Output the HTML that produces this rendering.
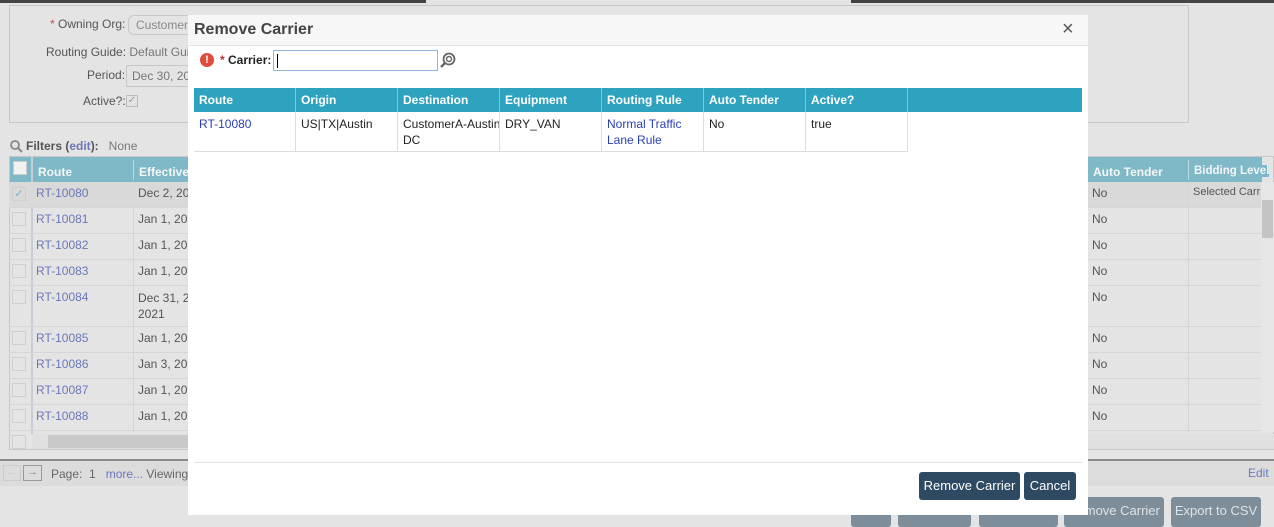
<!DOCTYPE html>
<html><head><meta charset="utf-8"><style>
*{box-sizing:border-box;margin:0;padding:0}
body{width:1274px;height:525px;overflow:hidden;background:#e4e4e4;font-family:"Liberation Sans",sans-serif;font-size:12px;color:#555;position:relative}
.a{position:absolute;white-space:nowrap}
.lnk{color:#6b78b8}
.bh{background:#7fb8c7;color:#f2f6f7;font-weight:bold}
.row{position:absolute;left:9px;width:1253px;border-bottom:1px solid #d6d6d6}
.btn{position:absolute;top:497px;height:30px;background:#7d8d99;color:#dfe3e6;border-radius:3px;font-size:13px;text-align:center;line-height:28px;white-space:nowrap;overflow:hidden}
.m{position:absolute;left:188px;top:15px;width:900px;height:500px;background:#fff}
.th{position:absolute;top:73px;height:24px;background:#2ea3bf;color:#fff;font-weight:bold;line-height:24px;padding-left:5px;border-right:1px solid #7fc6d8}
.td{position:absolute;top:97px;height:40px;padding:4px 5px;color:#222;line-height:16px;border-right:1px solid #ddd;border-bottom:1px solid #ddd;white-space:nowrap;overflow:hidden}
.ck{position:absolute;left:12px;width:14px;height:14px;border:1px solid #cfcfcf}
</style></head><body>
<div class="a" style="left:0;top:0;width:1274px;height:3px;background:#444"></div>
<div class="a" style="left:426px;top:0;width:425px;height:3px;background:#e4e4e4"></div>
<div class="a" style="left:9px;top:5px;width:1180px;height:118px;border:1px solid #c8c8c8"></div>
<div class="a" style="left:50px;top:17px;color:#555"><span style="color:#b55">*</span> Owning Org:</div>
<div class="a" style="left:128px;top:15px;width:70px;height:20px;border:1px solid #c8c8c8;border-radius:6px;padding:2px 7px;color:#888;overflow:hidden">CustomerA</div>
<div class="a" style="left:46px;top:45px">Routing Guide: <span style="color:#777">Default Guide</span></div>
<div class="a" style="left:87px;top:68px">Period:</div>
<div class="a" style="left:126px;top:65px;width:70px;height:22px;border:1px solid #c8c8c8;padding:3px 5px;color:#777;overflow:hidden">Dec 30, 20</div>
<div class="a" style="left:83px;top:94px">Active?:</div>
<div class="a" style="left:126px;top:95px;width:12px;height:12px;border:1px solid #bbb;color:#999;font-size:10px;line-height:10px;text-align:center">✓</div>
<svg class="a" style="left:9px;top:139px" width="14" height="14" viewBox="0 0 14 14"><circle cx="6" cy="6" r="4" fill="none" stroke="#888" stroke-width="1.8"/><path d="M9 9 L13 13" stroke="#888" stroke-width="2"/></svg>
<div class="a" style="left:26px;top:139px;font-weight:bold;color:#555">Filters (<span class="lnk">edit</span>): <span style="font-weight:normal;color:#777">&nbsp; None</span></div>
<div class="a" style="left:9px;top:156px;width:1265px;height:294px;border:1px solid #c8c8c8"></div>
<div class="a bh" style="left:10px;top:157px;width:1252px;height:25px"></div>
<div class="a" style="left:13px;top:161px;width:14px;height:14px;border:1px solid #ccc;background:#f2f2f2"></div>
<div class="a" style="left:31px;top:157px;width:2px;height:277px;background:#c8cdd5"></div>
<div class="a bh" style="left:38px;top:165px">Route</div>
<div class="a bh" style="left:139px;top:165px">Effective</div>
<div class="a" style="left:133px;top:160px;width:1px;height:20px;background:#b9dbe4"></div>
<div class="a bh" style="left:1093px;top:165px">Auto Tender</div>
<div class="a" style="left:1188px;top:160px;width:1px;height:20px;background:#b9dbe4"></div>
<div class="a bh" style="left:1194px;top:165px;font-size:11.5px">Bidding Level</div>
<div class="row" style="top:182px;height:26px;background:#d9d9d9"></div>
<div class="row" style="top:208px;height:26px"></div>
<div class="row" style="top:234px;height:26px"></div>
<div class="row" style="top:260px;height:26px"></div>
<div class="row" style="top:286px;height:41px"></div>
<div class="row" style="top:327px;height:26px"></div>
<div class="row" style="top:353px;height:26px"></div>
<div class="row" style="top:379px;height:26px"></div>
<div class="row" style="top:405px;height:26px"></div>
<div class="a" style="left:133px;top:182px;width:1px;height:250px;background:#d6d6d6"></div>
<div class="a" style="left:1188px;top:182px;width:1px;height:250px;background:#d6d6d6"></div>
<div class="ck" style="top:187px;color:#7ab5cb;font-size:11px;line-height:12px;text-align:center">✓</div>
<div class="ck" style="top:212px"></div>
<div class="ck" style="top:238px"></div>
<div class="ck" style="top:264px"></div>
<div class="ck" style="top:290px"></div>
<div class="ck" style="top:331px"></div>
<div class="ck" style="top:357px"></div>
<div class="ck" style="top:383px"></div>
<div class="ck" style="top:409px"></div>
<div class="ck" style="top:435px"></div>
<div class="a lnk" style="left:36px;top:186px">RT-10080</div>
<div class="a lnk" style="left:36px;top:212px">RT-10081</div>
<div class="a lnk" style="left:36px;top:238px">RT-10082</div>
<div class="a lnk" style="left:36px;top:264px">RT-10083</div>
<div class="a lnk" style="left:36px;top:290px">RT-10084</div>
<div class="a lnk" style="left:36px;top:331px">RT-10085</div>
<div class="a lnk" style="left:36px;top:357px">RT-10086</div>
<div class="a lnk" style="left:36px;top:383px">RT-10087</div>
<div class="a lnk" style="left:36px;top:409px">RT-10088</div>
<div class="a" style="left:138px;top:186px">Dec 2, 201</div>
<div class="a" style="left:138px;top:212px">Jan 1, 201</div>
<div class="a" style="left:138px;top:238px">Jan 1, 201</div>
<div class="a" style="left:138px;top:264px">Jan 1, 201</div>
<div class="a" style="left:138px;top:290px;line-height:16px">Dec 31, 20<br>2021</div>
<div class="a" style="left:138px;top:331px">Jan 1, 201</div>
<div class="a" style="left:138px;top:357px">Jan 3, 201</div>
<div class="a" style="left:138px;top:383px">Jan 1, 201</div>
<div class="a" style="left:138px;top:409px">Jan 1, 201</div>
<div class="a" style="left:1092px;top:186px">No</div>
<div class="a" style="left:1092px;top:212px">No</div>
<div class="a" style="left:1092px;top:238px">No</div>
<div class="a" style="left:1092px;top:264px">No</div>
<div class="a" style="left:1092px;top:290px">No</div>
<div class="a" style="left:1092px;top:331px">No</div>
<div class="a" style="left:1092px;top:357px">No</div>
<div class="a" style="left:1092px;top:383px">No</div>
<div class="a" style="left:1092px;top:409px">No</div>
<div class="a" style="left:1193px;top:186px;font-size:11px;width:68px;overflow:hidden">Selected Carr</div>
<div class="a" style="left:1261px;top:182px;width:13px;height:250px;background:#e6e6e6"></div>
<div class="a" style="left:1262px;top:200px;width:11px;height:38px;background:#c4c4c4"></div>
<div class="a" style="left:32px;top:434px;width:1242px;height:15px;background:#e0e0e0"></div>
<div class="a" style="left:48px;top:435px;width:150px;height:13px;background:#c8c8c8"></div>
<div class="a" style="left:0;top:459px;width:1274px;height:2px;background:#8a8a8a"></div>
<div class="a" style="left:0;top:461px;width:1274px;height:25px;background:#dcdcdc"></div>
<div class="a" style="left:3px;top:465px;width:18px;height:16px;border:1px solid #ccc;color:#ccc;font-size:11px;text-align:center">←</div>
<div class="a" style="left:23px;top:465px;width:19px;height:16px;border:1px solid #999;color:#888;font-size:11px;text-align:center">→</div>
<div class="a" style="left:51px;top:467px;color:#666">Page: &nbsp;1 &nbsp; <span class="lnk">more...</span> Viewing 1-</div>
<div class="a lnk" style="left:1248px;top:466px">Edit</div>
<div class="btn" style="left:851px;width:40px">Save</div>
<div class="btn" style="left:898px;width:73px">New Route</div>
<div class="btn" style="left:979px;width:79px">Add Carrier</div>
<div class="btn" style="left:1064px;width:100px">Remove Carrier</div>
<div class="btn" style="left:1171px;width:90px">Export to CSV</div>

<div class="m">
<div class="a" style="left:0;top:0;width:900px;height:31px;background:#f7f7f7;border-bottom:1px solid #e6e6e6"></div>
<div class="a" style="left:6px;top:6px;font-size:16px;font-weight:bold;color:#444">Remove Carrier</div>
<div class="a" style="left:874px;top:4px;font-size:20px;color:#555;line-height:20px">×</div>
<div class="a" style="left:12px;top:38px;width:14px;height:14px;border-radius:50%;background:#e04b3c;color:#fff;font-weight:bold;font-size:11px;line-height:14px;text-align:center">!</div>
<div class="a" style="left:32px;top:38px;color:#222;font-weight:bold"><span style="color:#b33">*</span> Carrier:</div>
<div class="a" style="left:85px;top:35px;width:165px;height:21px;border:1px solid #8fb5d9"><div style="position:absolute;left:3px;top:3px;width:1px;height:14px;background:#000"></div></div>
<svg class="a" style="left:252px;top:37px" width="16" height="16" viewBox="0 0 16 16"><circle cx="9" cy="7" r="5.5" fill="none" stroke="#666" stroke-width="1.8"/><circle cx="9" cy="7" r="2.5" fill="none" stroke="#666" stroke-width="1.5"/><path d="M5 11 L1 15" stroke="#666" stroke-width="2.4"/></svg>
<div class="a" style="left:6px;top:73px;width:888px;height:24px;background:#2ea3bf"></div>
<div class="th" style="left:6px;width:102px">Route</div>
<div class="th" style="left:108px;width:102px">Origin</div>
<div class="th" style="left:210px;width:102px">Destination</div>
<div class="th" style="left:312px;width:102px">Equipment</div>
<div class="th" style="left:414px;width:102px">Routing Rule</div>
<div class="th" style="left:516px;width:102px">Auto Tender</div>
<div class="th" style="left:618px;width:102px">Active?</div>
<div class="td" style="left:6px;width:102px;color:#2a3fb0">RT-10080</div>
<div class="td" style="left:108px;width:102px">US|TX|Austin</div>
<div class="td" style="left:210px;width:102px">CustomerA-Austin<br>DC</div>
<div class="td" style="left:312px;width:102px">DRY_VAN</div>
<div class="td" style="left:414px;width:102px;color:#2a3fb0">Normal Traffic<br>Lane Rule</div>
<div class="td" style="left:516px;width:102px">No</div>
<div class="td" style="left:618px;width:102px">true</div>
<div class="a" style="left:6px;top:447px;width:888px;height:1px;background:#e3e3e3"></div>
<div class="a" style="left:731px;top:457px;width:101px;height:28px;background:#2d4a62;border-radius:3px;color:#fff;font-size:13px;line-height:28px;text-align:center">Remove Carrier</div>
<div class="a" style="left:836px;top:457px;width:52px;height:28px;background:#2d4a62;border-radius:3px;color:#fff;font-size:13px;line-height:28px;text-align:center">Cancel</div>
</div>
</body></html>
